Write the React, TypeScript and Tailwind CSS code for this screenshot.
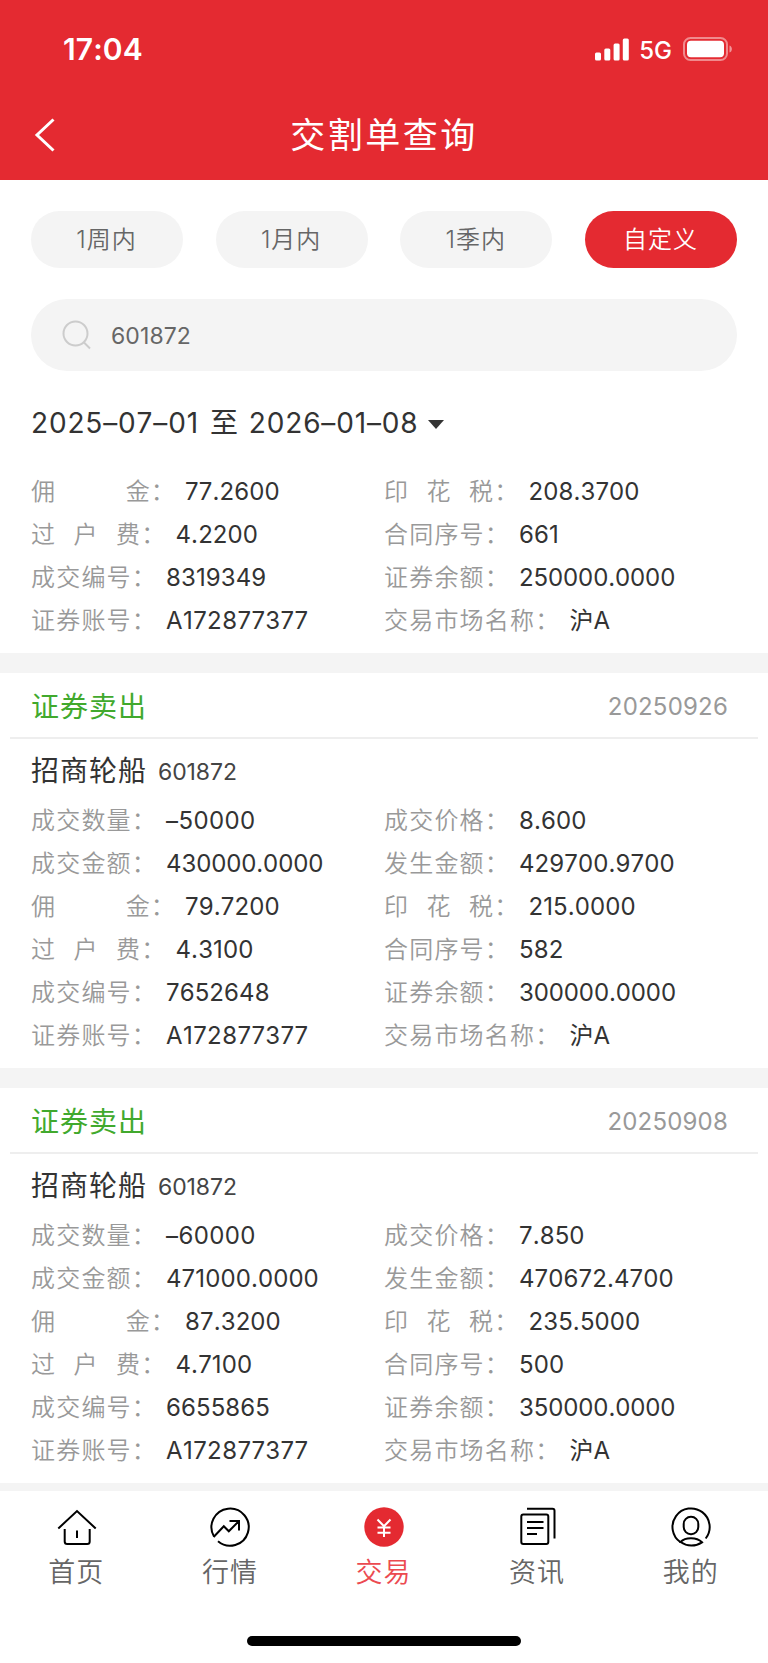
import { useState } from "react";

interface Field {
  label: string;
  value: string;
}

interface Deal {
  id: string;
  action: string;
  date: string;
  name: string;
  code: string;
  fields: Field[];
}

const ranges = ["1周内", "1月内", "1季内", "自定义"];

const firstFields: Field[] = [
  { label: "佣 金", value: "77.2600" },
  { label: "印 花 税", value: "208.3700" },
  { label: "过 户 费", value: "4.2200" },
  { label: "合同序号", value: "661" },
  { label: "成交编号", value: "8319349" },
  { label: "证券余额", value: "250000.0000" },
  { label: "证券账号", value: "A172877377" },
  { label: "交易市场名称", value: "沪A" },
];

const deals: Deal[] = [
  {
    id: "7652648",
    action: "证券卖出",
    date: "20250926",
    name: "招商轮船",
    code: "601872",
    fields: [
      { label: "成交数量", value: "–50000" },
      { label: "成交价格", value: "8.600" },
      { label: "成交金额", value: "430000.0000" },
      { label: "发生金额", value: "429700.9700" },
      { label: "佣 金", value: "79.7200" },
      { label: "印 花 税", value: "215.0000" },
      { label: "过 户 费", value: "4.3100" },
      { label: "合同序号", value: "582" },
      { label: "成交编号", value: "7652648" },
      { label: "证券余额", value: "300000.0000" },
      { label: "证券账号", value: "A172877377" },
      { label: "交易市场名称", value: "沪A" },
    ],
  },
  {
    id: "6655865",
    action: "证券卖出",
    date: "20250908",
    name: "招商轮船",
    code: "601872",
    fields: [
      { label: "成交数量", value: "–60000" },
      { label: "成交价格", value: "7.850" },
      { label: "成交金额", value: "471000.0000" },
      { label: "发生金额", value: "470672.4700" },
      { label: "佣 金", value: "87.3200" },
      { label: "印 花 税", value: "235.5000" },
      { label: "过 户 费", value: "4.7100" },
      { label: "合同序号", value: "500" },
      { label: "成交编号", value: "6655865" },
      { label: "证券余额", value: "350000.0000" },
      { label: "证券账号", value: "A172877377" },
      { label: "交易市场名称", value: "沪A" },
    ],
  },
];

function StatusBar() {
  return (
    <div className="h-[98px] pl-[63px] pr-9 flex justify-between items-center text-white">
      <span className="text-[30px] font-semibold leading-none tracking-[0.1px]">17:04</span>
      <div className="flex items-center">
        <svg width="34" height="23" viewBox="0 0 34 23" fill="currentColor">
          <rect x="0" y="14.5" width="6" height="8" rx="1.5" />
          <rect x="9.3" y="10.5" width="6" height="12" rx="1.5" />
          <rect x="18.6" y="5.5" width="6" height="17" rx="1.5" />
          <rect x="27.8" y="0.5" width="6" height="22" rx="1.5" />
        </svg>
        <span className="ml-[10px] mt-[3px] text-[24px] leading-none font-[450]">5G</span>
        <svg className="ml-[11px]" width="49" height="24" viewBox="0 0 49 24" fill="none">
          <rect x="1" y="1" width="43" height="22" rx="6.5" stroke="white" strokeOpacity="0.45" strokeWidth="2" />
          <rect x="4" y="3.8" width="37" height="16.4" rx="4" fill="white" />
          <path d="M46.5 8.4c3.2 1.2 3.2 6 0 7.2z" fill="white" fillOpacity="0.5" />
        </svg>
      </div>
    </div>
  );
}

function FieldItem({ label, value }: Field) {
  const spacing = label.length === 3 ? "[word-spacing:61.5px]" : "[word-spacing:9.4px]";
  let tracking = "tracking-[0.1px]";
  if (value.startsWith("–") || value.startsWith("A")) tracking = "tracking-[0.4px]";
  if (value.endsWith("0000.0000")) tracking = "tracking-[-0.1px]";
  return (
    <div className="flex items-center h-[43px] whitespace-nowrap">
      <span className={`text-[24px] font-[350] text-[#999] tracking-[1.2px] ${spacing}`}>{label}：</span>
      <span className={`ml-[9px] text-[24px] text-[#333] ${tracking}`}>{value}</span>
    </div>
  );
}

function FieldGrid({ fields }: { fields: Field[] }) {
  return (
    <div className="grid grid-cols-[353px_1fr] pl-[31px]">
      {fields.map((f) => (
        <FieldItem key={f.label} label={f.label} value={f.value} />
      ))}
    </div>
  );
}

function DealCard({ deal }: { deal: Deal }) {
  return (
    <div className="h-[415px] shrink-0 border-t-[20px] border-[#f4f4f4] bg-white">
      <div className="h-[66px] mx-[10px] pt-[3px] pl-[21px] pr-[30px] flex justify-between items-center border-b-2 border-[#eeeeee]">
        <span className="text-[28px] text-[#41a92d] tracking-[1px]">{deal.action}</span>
        <span className="text-[24px] text-[#999] tracking-[0.2px]">{deal.date}</span>
      </div>
      <div className="h-[60px] pt-[4px] pl-[31px] flex items-center">
        <span className="text-[28px] text-[#333] tracking-[1px]">{deal.name}</span>
        <span className="ml-[11px] mt-[2px] text-[23px] text-[#444] tracking-[-0.1px]">{deal.code}</span>
      </div>
      <FieldGrid fields={deal.fields} />
    </div>
  );
}

function HomeIcon() {
  return (
    <svg width="42" height="42" viewBox="0 0 42 42" fill="none" stroke="black" strokeWidth="2">
      <path d="M2.3 22.5 21 5l18.7 17.5" />
      <path d="M8.7 23v12.5a2.5 2.5 0 0 0 2.5 2.5h20a2.5 2.5 0 0 0 2.5-2.5V23M21 24.5v7.5" />
    </svg>
  );
}

function MarketIcon() {
  return (
    <svg width="42" height="42" viewBox="0 0 42 42" fill="none" stroke="black" strokeWidth="2">
      <path d="M9 35.3A18.6 18.6 0 1 0 5 30.5" />
      <path d="M4.6 31 14.8 20.3l5 5L30 15M20.5 15H30v9.5" />
    </svg>
  );
}

function TradeIcon() {
  return (
    <svg width="42" height="42" viewBox="0 0 42 42" fill="none">
      <circle cx="21" cy="21" r="19.7" fill="#e42a31" />
      <path d="m14.5 13.5 6.5 6.8 6.5-6.8M21 20v11M14.5 21.5h13M14.5 26.7h13" stroke="white" strokeWidth="2" />
    </svg>
  );
}

function NewsIcon() {
  return (
    <svg width="42" height="42" viewBox="0 0 42 42" fill="none" stroke="black" strokeWidth="2">
      <rect x="4.3" y="8.5" width="27" height="29.5" rx="2" />
      <path d="M10 2.8h25.5a2 2 0 0 1 2 2V32.5M10 16h16.5M10 22h16.5M10 28h10" />
    </svg>
  );
}

function MineIcon() {
  return (
    <svg width="42" height="42" viewBox="0 0 42 42" fill="none" stroke="black" strokeWidth="2">
      <path d="M10.5 36.3A18.6 18.6 0 1 1 35.7 32.5" />
      <rect x="13.7" y="10.8" width="14.6" height="17.4" rx="7.2" />
      <path d="M10.5 36c5-5 16-5 21.5.3-6.500 4.300-15 4.300-21.500-.3z" />
    </svg>
  );
}

const tabs = [
  { label: "首页", icon: <HomeIcon /> },
  { label: "行情", icon: <MarketIcon /> },
  { label: "交易", icon: <TradeIcon /> },
  { label: "资讯", icon: <NewsIcon /> },
  { label: "我的", icon: <MineIcon /> },
];

export default function App() {
  const [range, setRange] = useState("自定义");
  const [tab, setTab] = useState("交易");
  const [keyword, setKeyword] = useState("601872");

  return (
    <div className="w-[768px] h-[1663px] overflow-hidden bg-white flex flex-col [font-kerning:none] font-['Inter','Noto_Sans_CJK_SC',sans-serif]">
      <header className="h-[180px] shrink-0 bg-[#e42a31]">
        <StatusBar />
        <div className="relative h-[75px] flex items-center justify-center text-white">
          <button className="absolute left-[34px] top-[20px]">
            <svg width="22" height="34" viewBox="0 0 22 34" fill="none" stroke="white" strokeWidth="3">
              <path d="M19.5 1.5 3 17l16.5 15.5" />
            </svg>
          </button>
          <h1 className="text-[35px] font-normal tracking-[2.5px]">交割单查询</h1>
        </div>
      </header>

      <div className="mt-[31px] px-[31px] flex justify-between">
        {ranges.map((r) => (
          <button
            key={r}
            onClick={() => setRange(r)}
            className={`w-[152px] h-[57px] pr-px rounded-full text-[24px] font-[350] tracking-[1px] ${
              r === range ? "bg-[#e42a31] text-white" : "bg-[#f4f4f4] text-[#666]"
            }`}
          >
            {r}
          </button>
        ))}
      </div>

      <div className="mt-[31px] mx-[31px] h-[72px] shrink-0 rounded-full bg-[#f4f4f4] flex items-center pl-[31px]">
        <svg width="30" height="30" viewBox="0 0 30 30" fill="none" stroke="#ccc" strokeWidth="2">
          <circle cx="13.5" cy="13.5" r="12" />
          <path d="m21.5 22 6.5 6.5" />
        </svg>
        <input
          value={keyword}
          onChange={(e) => setKeyword(e.target.value)}
          className="ml-[19px] mt-[2px] flex-1 bg-transparent outline-none text-[23px] text-[#666] tracking-[0.1px]"
        />
      </div>

      <div className="h-[98px] shrink-0 pl-[31px] pt-[5px] flex items-center text-[28px] text-[#333] tracking-[0.85px]">
        <span>2025–07–01</span>
        <span className="ml-[11px]">至</span>
        <span className="ml-[10px]">2026–01–08</span>
        <span className="ml-[10px] mt-[4px] border-x-[8px] border-t-[9px] border-x-transparent border-t-[#333]" />
      </div>

      <div className="pt-[1px] pb-[11px]">
        <FieldGrid fields={firstFields} />
      </div>

      {deals.map((d) => (
        <DealCard key={d.id} deal={d} />
      ))}

      <nav className="border-t-[8px] border-[#f4f4f4] bg-white grid grid-cols-5 pt-[15px]">
        {tabs.map((t) => (
          <button key={t.label} onClick={() => setTab(t.label)} className="flex flex-col items-center">
            {t.icon}
            <span
              className={`mt-[5px] pr-px text-[27px] leading-[40px] font-[350] tracking-[1px] ${
                t.label === tab ? "text-[#ec4a50]" : "text-[#666]"
              }`}
            >
              {t.label}
            </span>
          </button>
        ))}
      </nav>
      <div className="mt-auto mb-[17px] mx-auto w-[274px] h-[10px] shrink-0 rounded-full bg-black" />
    </div>
  );
}
